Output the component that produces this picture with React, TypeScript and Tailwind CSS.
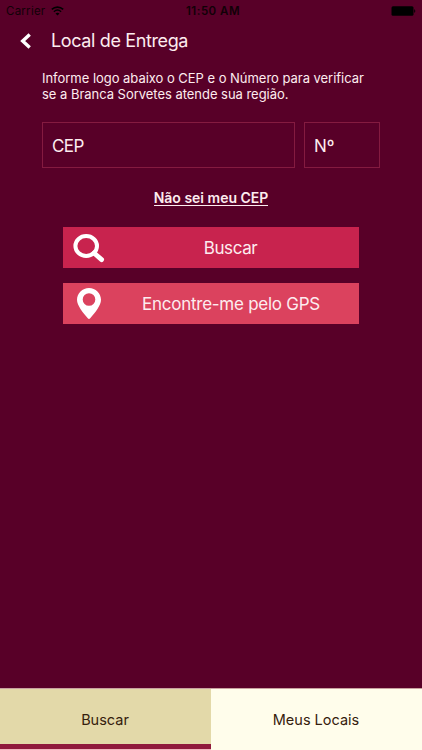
import React, { useState } from 'react';

const tabs = [
  { id: 'search', label: 'Buscar' },
  { id: 'places', label: 'Meus Locais' },
];

const StatusBar: React.FC = () => (
  <div className="relative flex h-[22px] items-center justify-between pl-[6px] pr-[6px] text-[11.5px] text-black">
    <div className="flex items-center gap-[6px]">
      <span className="leading-[22px] tracking-[0.25px] opacity-80">Carrier</span>
      <svg className="h-[10px] w-[13px]" viewBox="0 0 13 10" fill="none" stroke="currentColor">
        <path d="M0.8 3.4C4 0.3 9 0.3 12.2 3.4" strokeWidth="1.6" />
        <path d="M2.9 5.7C5 3.8 8 3.8 10.1 5.7" strokeWidth="1.5" />
        <path d="M6.5 9.4L4.5 7.4C5.6 6.4 7.4 6.4 8.5 7.4Z" fill="currentColor" stroke="none" />
      </svg>
    </div>
    <span className="absolute left-[186px] top-0 font-semibold leading-[22px] tracking-[0.5px] opacity-80">
      11:50 AM
    </span>
    <svg className="h-[10px] w-[25px]" viewBox="0 0 25 10" fill="currentColor">
      <rect x="0.5" y="0.2" width="22" height="9.6" rx="1.5" />
      <path d="M23.2 3.2C24.6 3.5 24.6 6.5 23.2 6.8Z" />
    </svg>
  </div>
);

const SearchIcon: React.FC = () => (
  <svg className="h-[30px] w-[32px]" viewBox="0 0 32 30" fill="none" stroke="white">
    <ellipse cx="13.2" cy="13" rx="10.8" ry="9.9" strokeWidth="4" />
    <path d="M21 20L28.6 26.6" strokeWidth="4.8" strokeLinecap="round" />
  </svg>
);

const PinIcon: React.FC = () => (
  <svg className="h-[31px] w-[24px]" viewBox="0 0 24 31" fill="white">
    <path
      fillRule="evenodd"
      d="M12 0C5.4 0 0 5.2 0 11.8C0 17.5 5.8 24.6 10.8 30.3C11.5 31.1 12.5 31.1 13.2 30.3C18.2 24.6 24 17.5 24 11.8C24 5.2 18.6 0 12 0ZM12 5.2A6.3 6.3 0 1 1 12 17.8A6.3 6.3 0 0 1 12 5.2Z"
    />
  </svg>
);

const App: React.FC = () => {
  const [activeTab, setActiveTab] = useState('search');

  return (
    <div className="flex h-[750px] w-[422px] flex-col overflow-hidden bg-[#580028] font-[Inter,'Liberation_Sans',sans-serif] text-[#fdecef]">
      <StatusBar />

      <header className="flex h-[37px] items-center pl-[20px]">
        <button type="button" aria-label="Voltar" className="w-[31px]">
          <svg className="h-[16px] w-[11px]" viewBox="0 0 11 16" fill="none" stroke="white" strokeWidth="3.4">
            <path d="M9.7 1.5L2.7 8L9.7 14.5" />
          </svg>
        </button>
        <h1 className="text-[18px] leading-[24px] tracking-[-0.37px]">Local de Entrega</h1>
      </header>

      <main className="flex-1">
        <p className="whitespace-nowrap pl-[42px] pt-[11px] text-[13px] leading-[16px] tracking-[-0.03px]">
          Informe logo abaixo o CEP e o Número para verificar
          <br />
          se a Branca Sorvetes atende sua região.
        </p>

        <form className="flex gap-[9px] pl-[42px] pt-[20px]" onSubmit={(e) => e.preventDefault()}>
          <input
            type="text"
            aria-label="CEP"
            placeholder="CEP"
            className="h-[46px] w-[253px] border border-[#841b40] px-[9px] pt-[2px] text-[17px] tracking-[-0.6px] placeholder:text-[#fdecef] focus:outline-none"
          />
          <input
            type="text"
            aria-label="Número"
            placeholder="Nº"
            className="h-[46px] w-[76px] border border-[#841b40] px-[9px] pt-[2px] text-[17px] placeholder:text-[#fdecef] focus:outline-none"
          />
        </form>

        <div className="flex justify-center pt-[22px]">
          <a href="#" className="border-b border-[#fdecef] text-[14px] font-semibold leading-[15px]">
            Não sei meu CEP
          </a>
        </div>

        <div className="flex flex-col gap-[15px] pl-[63px] pt-[21px]">
          <button type="button" className="flex h-[41px] w-[296px] items-center bg-[#c8234e] pl-[10px]">
            <SearchIcon />
            <span className="flex-1 pr-[3px] pt-[2px] text-center text-[17px] tracking-[-0.4px]">Buscar</span>
          </button>
          <button type="button" className="flex h-[41px] w-[296px] items-center bg-[#db425e] pl-[14px]">
            <PinIcon />
            <span className="flex-1 pl-[2px] pt-[2px] text-center text-[17px] tracking-[-0.26px]">
              Encontre-me pelo GPS
            </span>
          </button>
        </div>
      </main>

      <nav className="flex h-[62px] border-t border-[#c9a2a0] bg-[#fffdeb] text-[14.5px] text-[#35200d]">
        {tabs.map((tab) => (
          <button
            key={tab.id}
            type="button"
            onClick={() => setActiveTab(tab.id)}
            className={`h-[60px] w-1/2 border-b-[5px] pr-[1px] pt-[6px] ${
              activeTab === tab.id
                ? 'border-[#901a3c] bg-[#e3d9a9] shadow-[0_1px_0_#f2b3bd]'
                : 'border-[#fffdeb] bg-[#fffdeb]'
            }`}
          >
            {tab.label}
          </button>
        ))}
      </nav>
    </div>
  );
};

export default App;
